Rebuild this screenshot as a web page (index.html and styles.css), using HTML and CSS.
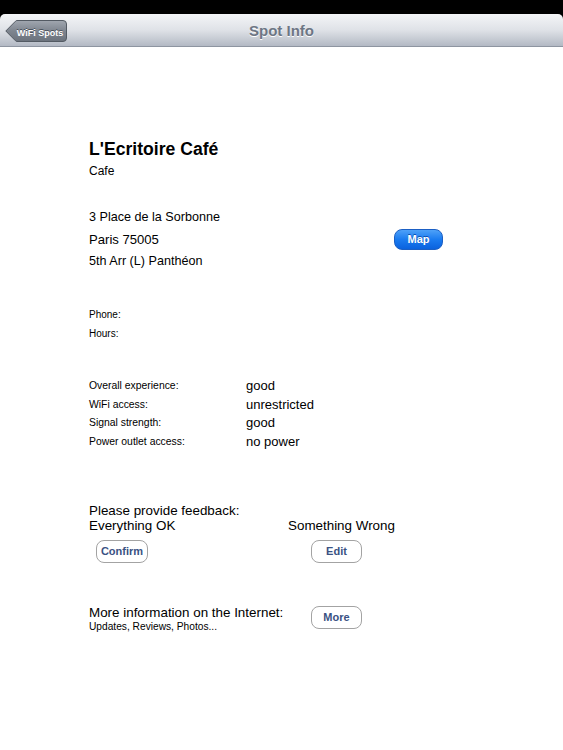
FILE: index.html
```html
<!DOCTYPE html>
<html lang="en">
<head>
    <meta charset="UTF-8">
    <meta name="viewport" content="width=device-width, initial-scale=1.0">
    <title>Spot Info</title>
    <link rel="stylesheet" href="styles.css">
</head>
<body>
    <div class="topbar">
        <div class="navbar">
            <button class="back-button">
                <svg class="back-shape" width="62" height="22" viewBox="0 0 62 22">
                    <defs>
                        <linearGradient id="backGrad" x1="0" y1="0" x2="0" y2="1">
                            <stop offset="0" stop-color="#a1a7b0"/>
                            <stop offset="0.5" stop-color="#7e858f"/>
                            <stop offset="1" stop-color="#6b727c"/>
                        </linearGradient>
                    </defs>
                    <path d="M0.8 11 L10.5 1.2 Q11 0.5 12 0.5 L58 0.5 Q61.5 0.5 61.5 4 L61.5 18 Q61.5 21.5 58 21.5 L12 21.5 Q11 21.5 10.5 20.8 Z" fill="url(#backGrad)" stroke="#535a63"/>
                </svg>
                <span class="back-label">WiFi Spots</span>
            </button>
            <h1 class="nav-title">Spot Info</h1>
        </div>
    </div>

    <div class="content">
        <h2 class="place-name">L'Ecritoire Café</h2>
        <p class="category">Cafe</p>

        <div class="address">
            <div class="addr-line small">3 Place de la Sorbonne</div>
            <div class="addr-line">
                <span class="addr-text">Paris 75005</span>
                <button class="map-button">Map</button>
            </div>
            <div class="addr-line small">5th Arr (L) Panthéon</div>
        </div>

        <div class="contact">
            <div>Phone:</div>
            <div>Hours:</div>
        </div>

        <div class="ratings">
            <div class="rating-row"><span class="rating-label">Overall experience:</span><span class="rating-value">good</span></div>
            <div class="rating-row"><span class="rating-label">WiFi access:</span><span class="rating-value">unrestricted</span></div>
            <div class="rating-row"><span class="rating-label">Signal strength:</span><span class="rating-value">good</span></div>
            <div class="rating-row"><span class="rating-label">Power outlet access:</span><span class="rating-value">no power</span></div>
        </div>

        <div class="feedback">
            <div class="feedback-title">Please provide feedback:</div>
            <div class="feedback-cols">
                <div class="feedback-col left">
                    <div>Everything OK</div>
                    <button class="round-button confirm">Confirm</button>
                </div>
                <div class="feedback-col right">
                    <div>Something Wrong</div>
                    <button class="round-button edit">Edit</button>
                </div>
            </div>
        </div>

        <div class="more-info">
            <div class="more-text">
                <div class="more-title">More information on the Internet:</div>
                <div class="more-sub">Updates, Reviews, Photos...</div>
            </div>
            <button class="round-button more">More</button>
        </div>
    </div>
</body>
</html>
```

FILE: styles.css
```css
body {
    margin: 0;
    font-family: "Liberation Sans", Arial, sans-serif;
    background: #fff;
    color: #000;
}

.topbar {
    background: #000;
    padding-top: 14px;
}

.navbar {
    position: relative;
    height: 32px;
    border-radius: 5px 5px 0 0;
    background: linear-gradient(#f4f5f7, #dfe2e7 50%, #b3b9c4);
    border-bottom: 1px solid #8e95a1;
    display: flex;
    align-items: center;
    justify-content: center;
}

.nav-title {
    margin: 0;
    font-size: 15px;
    font-weight: bold;
    color: #6d7684;
    text-shadow: 0 1px 0 #fff;
}

.back-button {
    position: absolute;
    left: 5px;
    top: 6px;
    width: 62px;
    height: 22px;
    padding: 0 0 0 8px;
    border: 0;
    background: none;
    font-family: inherit;
    text-align: center;
}

.back-shape {
    position: absolute;
    left: 0;
    top: 0;
}

.back-label {
    position: relative;
    font-size: 9px;
    font-weight: bold;
    color: #fff;
    text-shadow: 0 -1px 0 #4b525b;
}

.content {
    padding: 91px 0 0 89px;
}

.place-name {
    margin: 0;
    font-size: 17.6px;
    line-height: 22px;
    font-weight: bold;
}

.category {
    margin: 3px 0 0;
    font-size: 12px;
    line-height: 16px;
}

.address {
    margin-top: 27px;
}

.addr-line {
    display: flex;
    align-items: center;
    height: 22px;
    font-size: 13.1px;
}

.addr-line.small {
    font-size: 12.6px;
}

.addr-text {
    width: 305px;
}

.map-button {
    width: 49px;
    height: 21px;
    padding: 0;
    border: 1px solid #1b5fc4;
    border-radius: 8px;
    background: linear-gradient(#4ea1f8, #1a7bf0 50%, #0a62de);
    color: #fff;
    font-family: inherit;
    font-size: 11px;
    font-weight: bold;
    text-shadow: 0 -1px 0 #0b4fb0;
}

.contact {
    margin-top: 33px;
    font-size: 10px;
    line-height: 19px;
}

.ratings {
    margin-top: 33px;
}

.rating-row {
    display: flex;
    align-items: center;
    height: 18.7px;
}

.rating-label {
    width: 157px;
    font-size: 10.4px;
}

.rating-value {
    font-size: 13px;
}

.feedback {
    margin-top: 52px;
    font-size: 13.4px;
    line-height: 15px;
}

.feedback-cols {
    display: flex;
}

.feedback-col.left {
    width: 199px;
}

.round-button {
    display: block;
    height: 23px;
    padding: 0;
    margin-top: 7px;
    border: 1px solid #a3a3a3;
    border-radius: 8px;
    background: #fff;
    color: #3a5283;
    font-family: inherit;
    font-size: 11px;
    font-weight: bold;
}

.confirm {
    width: 52px;
    margin-left: 7px;
}

.edit {
    width: 51px;
    margin-left: 23px;
}

.more-info {
    display: flex;
    align-items: flex-start;
    margin-top: 42px;
}

.more-text {
    width: 222px;
}

.more-title {
    font-size: 13.4px;
    line-height: 15px;
}

.more-sub {
    font-size: 10.2px;
    line-height: 13px;
}

.more {
    width: 51px;
    margin-top: 1px;
}
```
